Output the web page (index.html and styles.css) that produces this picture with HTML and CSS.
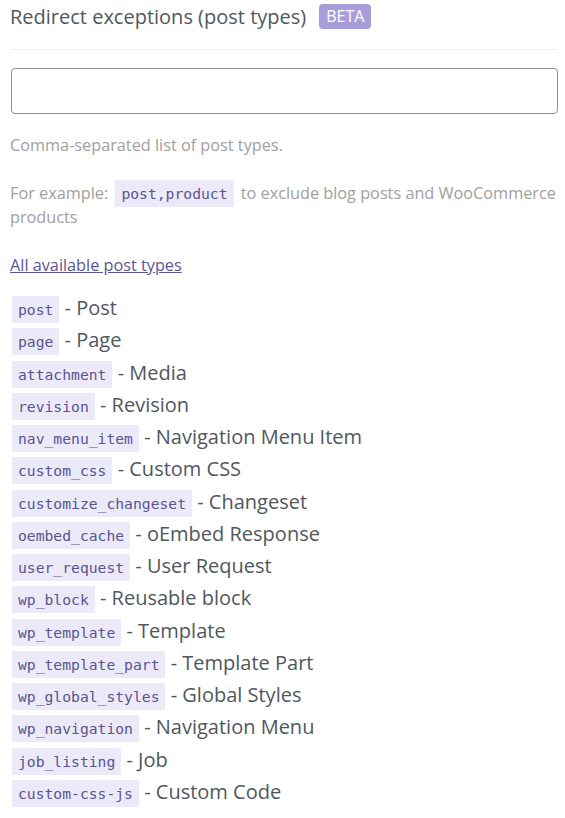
FILE: index.html
```html
<!DOCTYPE html>
<html lang="en">
<head>
  <meta charset="UTF-8" />
  <meta name="viewport" content="width=device-width, initial-scale=1.0" />
  <title>Redirect exceptions</title>
  <link rel="stylesheet" href="styles.css">
</head>
<body>
  <div class="panel">
    <!-- Header -->
    <div class="head">
      <h2 class="title">Redirect exceptions (post types)</h2>
      <span class="badge">BETA</span>
    </div>

    <!-- Field -->
    <input type="text" class="field" />

    <p class="hint">Comma-separated list of post types.</p>
    <p class="hint">For example: <code>post,product</code> to exclude blog posts and WooCommerce products</p>

    <p class="hint"><a href="#" class="more">All available post types</a></p>

    <!-- Post types -->
    <ul class="types">
      <li><code>post</code> - Post</li>
      <li><code>page</code> - Page</li>
      <li><code>attachment</code> - Media</li>
      <li><code>revision</code> - Revision</li>
      <li><code>nav_menu_item</code> - Navigation Menu Item</li>
      <li><code>custom_css</code> - Custom CSS</li>
      <li><code>customize_changeset</code> - Changeset</li>
      <li><code>oembed_cache</code> - oEmbed Response</li>
      <li><code>user_request</code> - User Request</li>
      <li><code>wp_block</code> - Reusable block</li>
      <li><code>wp_template</code> - Template</li>
      <li><code>wp_template_part</code> - Template Part</li>
      <li><code>wp_global_styles</code> - Global Styles</li>
      <li><code>wp_navigation</code> - Navigation Menu</li>
      <li><code>job_listing</code> - Job</li>
      <li><code>custom-css-js</code> - Custom Code</li>
    </ul>
  </div>
</body>
</html>
```

FILE: styles.css
```css
body {
  margin: 0;
  background: #fff;
  font-family: "Open Sans", sans-serif;
  color: #50575e;
}

.panel {
  padding: 0 7px 0 10px;
}

.head {
  display: flex;
  align-items: center;
  gap: 13px;
  height: 32px;
  padding-bottom: 17px;
  border-bottom: 1px solid #eeeeee;
  margin-bottom: 18px;
}

.title {
  margin: 0;
  font-size: 20px;
  font-weight: 400;
  color: #50575e;
}

.badge {
  background: #a99dd9;
  color: #fff;
  font-size: 16px;
  padding: 2px 7px;
  border-radius: 4px;
  line-height: 21px;
}

.field {
  display: block;
  box-sizing: border-box;
  width: calc(100% - 1px);
  height: 46px;
  margin: 0 0 0 1px;
  border: 1px solid #8c8f94;
  border-radius: 4px;
}

.hint {
  font-size: 16.25px;
  line-height: 24px;
  color: #a0a0a0;
  margin: 19px 0 0;
}

.hint + .hint {
  margin-top: 24px;
}

code {
  font-family: "DejaVu Sans Mono", monospace;
  font-size: 14.7px;
  line-height: 1;
  background: #eceaf8;
  color: #5a5490;
  padding: 5px 6px;
}

.hint code {
  margin: 0 3px;
  padding: 5px 6px;
}

.more {
  color: #5c5590;
}

.types {
  list-style: none;
  margin: 15px 0 0;
  padding: 0;
}

.types li {
  font-size: 20px;
  line-height: 32.25px;
  color: #50575e;
}

.types code {
  margin-left: 2px;
}
```
